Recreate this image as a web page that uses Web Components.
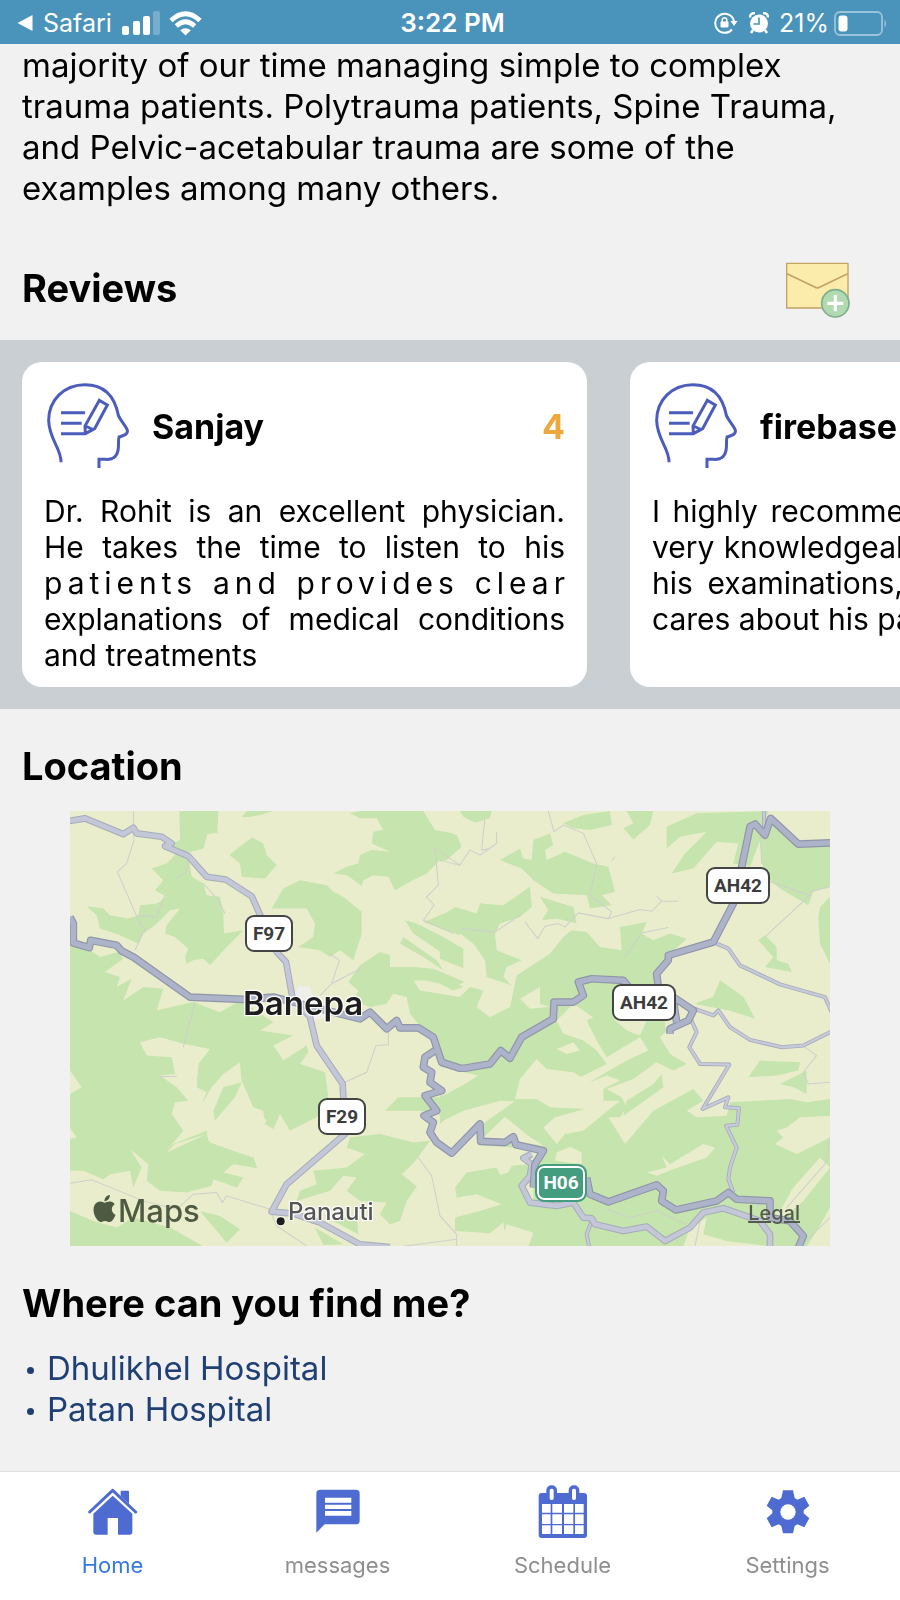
<!DOCTYPE html>
<html lang="en">
<head>
<meta charset="utf-8">
<meta name="viewport" content="width=device-width, initial-scale=1">
<title>Doctor profile</title>
<style>
  html { background: #f1f1f1; }
  body { margin: 0; font-family: Inter, "Liberation Sans", sans-serif; color: #000; }
</style>
</head>
<body>
<doctor-app></doctor-app>

<template id="t-status-bar">
  <style>
    :host { display: grid; grid-template-columns: 1fr auto 1fr; align-items: center; height: 44px; box-sizing: border-box;
      padding: 2px 12px 0 17px; background: #4a93bb; color: #fff; font-size: 25px; line-height: 30px; }
    svg { display: block; }
    .side { display: flex; align-items: center; }
    .end { justify-content: flex-end; }
    .back { display: flex; align-items: center; gap: 10px; color: inherit; text-decoration: none; margin-right: 10px; }
    .wifi { margin-left: 9px; }
    .time { font-size: 26px; font-weight: 600; }
    .alarm { margin: 0 10px 0 11px; }
    .battery { margin-left: 5px; }
  </style>
  <div class="side">
    <a class="back" href="#safari"><svg width="16" height="18" viewBox="0 0 16 18"><path d="M15.500 1v16L0.500 9z" fill="#fff"/></svg>Safari</a>
    <svg width="38" height="24" viewBox="0 0 38 24" fill="#fff"><rect y="15" width="7" height="9" rx="2"/><rect x="11" y="10" width="7" height="14" rx="2"/><rect x="21" y="5" width="7" height="19" rx="2"/><rect x="31" width="7" height="24" rx="2" opacity=".25"/></svg>
    <svg class="wifi" width="33" height="25" viewBox="0 0 33 25"><path d="M2 9.500Q16.500-4 31 9.500M7.300 15Q16.500 6.500 25.700 15" fill="none" stroke="#fff" stroke-width="4.600"/><path d="M16.500 24.500l-5.300-5.300q5.300-4 10.600 0z" fill="#fff"/></svg>
  </div>
  <div class="time">3:22 PM</div>
  <div class="side end">
    <svg width="24" height="22" viewBox="0 0 24 22"><path d="M18 17.500A9.500 9.500 0 1 1 20 9" fill="none" stroke="#fff" stroke-width="2"/><path d="M16.500 9h7l-3.500 5z" fill="#fff"/><rect x="6.500" y="9.500" width="8" height="6" rx="1" fill="#fff"/><path d="M8.200 10V8a2.300 2.300 0 0 1 4.600 0v2" fill="none" stroke="#fff" stroke-width="1.500"/></svg>
    <svg class="alarm" width="20" height="22" viewBox="0 0 20 22"><circle cx="10" cy="11.500" r="9" fill="#fff"/><path d="M1 5.500Q1 1 6 1M19 5.500Q19 1 14 1" fill="none" stroke="#fff" stroke-width="2.400"/><path d="M4 18l-2 3M16 18l2 3" stroke="#fff" stroke-width="2.500"/><path d="M10 5.500v6.500H4.500" fill="none" stroke="#4a93bb" stroke-width="1.600"/></svg>
    <span>21%</span>
    <svg class="battery" width="54" height="25" viewBox="0 0 54 25"><rect x="1" y="1" width="47" height="23" rx="5" fill="none" stroke="#fff" stroke-width="1.800" opacity=".45"/><rect x="4.500" y="4.500" width="9" height="16" rx="3" fill="#fff"/><path d="M50.500 8.500q3 4 0 8z" fill="#fff" opacity=".45"/></svg>
  </div>
</template>

<template id="t-heading">
  <style>
    :host { display: block; }
    h2 { margin: 0; font-size: 38px; line-height: 46px; font-weight: 700; }
  </style>
  <h2><slot></slot></h2>
</template>

<template id="t-review-card">
  <style>
    :host { display: block; flex: 0 0 565px; box-sizing: border-box; background: #fff; border-radius: 20px; padding: 20px 22px 14px; }
    header { display: flex; align-items: center; height: 88px; margin-bottom: 23px; font-size: 34px; font-weight: 700; }
    svg { width: 88px; height: 88px; margin-right: 20px; flex: none; }
    .score { margin-left: auto; color: #eea73c; }
    .text { font-size: 30px; line-height: 36px; text-align: justify; }
  </style>
  <header>
    <svg viewBox="132 126 264 264" fill="none" stroke="#4c5cbd" stroke-width="9">
      <path d="M183 367C184 325 148 300 146 242C146 180 192 134 255 134C312 134 344 168 355 226C361 240 377 258 382 270C384 282 376 285 357 291C353 308 359 325 351 341C345 355 333 360 315 358H297V384"/>
      <path d="M183 218H255M183 250H245M183 281H256L284 266L322 195L298 181L255 258L256 281M256 258L282 270"/>
    </svg>
    <slot name="name"></slot>
    <span class="score"><slot name="score"></slot></span>
  </header>
  <div class="text"><slot></slot></div>
</template>

<template id="t-shield">
  <style>
    :host { display: flex; align-items: center; justify-content: center; box-sizing: border-box; width: 64px; height: 37px;
      border: 2px solid #444; border-radius: 9px; background: #fff; color: #3c3c3c; font: 700 19px/22px Roboto, sans-serif; }
    :host([short]) { width: 48px; }
    :host([national]) { width: 52px; height: 38px; border-color: #459d80; background: #459d80; color: #fff; box-shadow: inset 0 0 0 2px #fff; }
  </style>
  <slot></slot>
</template>

<template id="t-map">
  <style>
    :host { display: block; position: relative; height: 435px; overflow: hidden; background: #e9edcc; }
    .land { display: block; width: 760px; height: 435px; }
    map-shield, .place, .brand, .legal { position: absolute; }
    .place { color: #1d1d1d; text-shadow: 0 0 2px #fff, 1px 1px 1px #fff, -1px -1px 1px #fff, 1px -1px 1px #fff, -1px 1px 1px #fff; }
    .city { left: 173px; top: 172px; font-size: 33px; line-height: 40px; font-weight: 600; }
    .town { left: 218px; top: 386px; font-size: 24px; line-height: 30px; font-weight: 500; color: #555; }
    .brand { left: 21px; top: 381px; display: flex; font-size: 31px; line-height: 38px; font-weight: 500; color: #4f5a42; }
    .brand svg { width: 27px; height: 27px; margin-top: 3px; }
    .legal { right: 30px; top: 390px; font-size: 20px; line-height: 24px; font-weight: 500; color: #555b4c; }
  </style>
  <svg class="land" viewBox="30 33 2280 1302" preserveAspectRatio="none" role="img" aria-label="Map of Banepa and Panauti">
    <defs>
      <g id="major">
        <path d="M30 350L40 370V428L88 442L92 420L170 435L185 452L220 470L390 590L550 597L640 590L700 605L840 640L900 655L930 635L980 685L1010 660L1020 682H1075L1120 710L1145 785L1200 803L1215 803L1290 790L1322 750L1350 773L1385 710L1480 655L1482 605H1540L1570 585L1555 545L1595 535L1690 540L1740 600"/>
        <path d="M1830 700V685L1885 660L1900 630L1840 590M1840 600L1850 665M1795 560L1790 520L1825 480V465L1960 425L2020 310L2045 200L2070 80L2085 72L2115 105L2132 55L2215 132L2320 128"/>
        <path d="M1125 750L1095 770L1090 800L1115 815L1110 845L1145 870L1095 885L1130 930L1092 945L1120 965L1110 995L1130 1025L1175 1057L1260 970L1262 1022L1335 1025L1360 1008L1368 1032L1450 1050L1425 1090L1420 1160M1580 1130L1590 1180L1645 1203L1790 1152L1810 1170L1805 1200L1848 1227L1970 1200L2005 1175L2030 1195L2130 1200V1250L2190 1260L2230 1305L2215 1340"/>
      </g>
      <g id="medium">
        <path d="M20 64L75 55L190 102L220 83L230 100L305 110L335 130L315 138L385 168L440 230L497 238L575 288L650 455L678 485L697 590L750 650L770 735L848 850L855 1000L680 1150L635 1232L700 1238L780 1265L900 1330L990 1338"/>
        <path d="M1415 1060L1390 1072L1415 1090L1410 1125L1385 1155L1410 1205L1490 1215L1540 1205L1570 1250L1595 1252L1605 1270L1690 1290L1760 1277L1815 1320L1890 1280L1930 1235L1990 1222L2100 1260L2130 1300V1340"/>
      </g>
      <path id="minor" d="M2112 33V85M1970 430L2005 445L2040 495L2160 552L2295 590L2315 635M1890 620L1960 645L1975 630L2010 680L2070 718L2165 740L2230 735L2320 690M1890 650L1910 695L1888 740L1920 790L2008 792L1928 925L2005 890L1995 920L2037 922L2032 972L1998 975L2030 1040L2010 1100L2005 1135L2020 1175M1595 1260L1580 1300L1588 1340"/>
    </defs>
    <g fill="#c6e4ad">
      <path d="M358 33H475L472 98L442 102L430 145L383 158L395 230L430 250L440 285L480 290L490 340L492 400L550 390L500 440L450 495L430 475L400 480L380 490L375 470L385 445L345 410L315 400L320 375L360 325L330 330L285 375L250 400L235 430L180 405L120 385L110 345L80 318L130 325L150 345L205 355L235 345L240 315L290 310L320 290L285 270L310 240L275 205L320 190L345 165L340 130L360 120Z"/>
      <path d="M575 112L610 130L620 165L650 195L615 235L545 230L540 190L508 165ZM545 50L560 33H640L600 45L565 52Z"/>
      <path d="M870 40L900 33H1090L1125 90L1180 100L1200 130L1140 180L1100 220L1050 245L1005 270L985 230L940 225L910 240L905 257L860 225L820 220L860 200L895 190L900 165L935 150L990 155L935 130L940 95L970 90L950 55L900 55Z"/>
      <path d="M635 325L670 265L720 240L800 255L820 275L850 290L905 335V400L880 480L840 450L810 470L780 450L715 440L760 410L765 370L740 325L690 325Z"/>
      <path d="M1090 365L1190 325L1200 405ZM1035 360L1070 370L1150 410L1210 445V505L1120 440L1060 400ZM1030 410L1130 480L1150 510L1090 470L1020 430Z"/>
      <path d="M865 545L900 495L960 455L990 465V500L1060 500L1120 505L1215 545L1180 560L1100 540L1060 540L1080 570L1200 590V780L1150 760L1115 705L1075 670L1050 640L1040 590L1000 580L980 610L930 620L880 600L895 570Z"/>
      <path d="M30 430L90 450L120 470L175 455L190 475L135 515L180 530L170 560L215 535L190 600L250 560L310 565L290 630L400 605L480 635L540 600L640 665L600 690L700 705L640 735L670 780L740 735L745 755L720 790L795 815L805 890L770 950L690 990L660 940L640 985L615 970L610 930L580 920L545 840L490 830L440 1000L345 1030L320 1055L440 1000L450 1025L520 1050L580 1070L592 1102L520 1090L490 1115L550 1130L530 1160L460 1135L455 1155L380 1175L300 1170L260 1140L265 1090L210 1045L245 1100L220 1160L210 1110L150 1120L130 1135L70 1110L30 1110Z"/>
      <path d="M975 930L1015 890H1110L1090 930ZM1020 890H1150V945L1080 930H1020ZM1140 885L1200 855V950L1140 920ZM760 1110L860 1100L915 1060L860 1040L870 1010L960 1000L1060 1025L1110 1020L1070 1075L1030 1120L1075 1150L1040 1200L1020 1260L990 1270L960 1240L980 1205L900 1200L860 1170L890 1130L850 1125L810 1170L710 1200L720 1170L770 1150Z"/>
      <path d="M30 1336V1230L100 1260L170 1280L220 1250L330 1280L430 1336ZM420 1230L480 1245L540 1285L500 1325ZM765 1280L850 1330L790 1332ZM820 1260L890 1240L895 1300Z"/>
    </g>
    <g fill="#c6e4ad" transform="translate(1140)">
      <path d="M60 33H155L150 55L105 68L70 50ZM0 95L50 105L65 140L20 180L0 185ZM370 70L430 45L510 33L515 75L450 90L400 85ZM560 33H640L630 75L580 118L550 85L580 70Z"/>
      <path d="M680 80L770 40L985 33L965 110L930 200L880 190L895 130L830 125L760 205L695 220L735 160L800 95L720 110L680 145ZM960 90L1000 50L1075 130L1170 125V260L1120 275L1105 315L1020 265L990 240L965 190ZM1140 320L1170 290V490L1140 430L1135 350Z"/>
      <path d="M280 120L330 100L340 135L315 150L320 180L375 155L460 190L505 200L525 275L485 285L515 315L450 325L440 285L340 280L280 240L245 205L180 180L240 145L250 175L275 180ZM300 290L400 320L410 370L350 355L305 360L325 330Z"/>
      <path d="M0 350L45 320L110 340L120 310L190 315L270 260L275 320L240 350L180 370L165 400L170 450L245 480L200 500L190 530L215 555L140 530L135 480L100 430L60 400L0 385ZM0 420L70 480L60 500L0 475ZM0 520L70 560L40 570L0 550Z"/>
      <path d="M230 525L330 460L370 410L395 390L440 395L480 440L545 450L540 380L620 365L605 400L640 420L690 400L740 415L690 460L650 520L680 700H0V600L60 590L90 560L130 570L110 620L150 650L210 620ZM765 610L820 590L840 540L910 590L945 655L870 630ZM955 420L975 405L1010 440V480L1045 490L1055 515L975 500L1000 470Z"/>
      <path d="M0 690H1170V1336H0Z"/>
    </g>
    <path d="M240 725L300 710L370 730L450 745L415 790L410 860L440 875L425 910L455 860L490 820L540 785L545 845L570 910L620 960L560 1040L445 1020L440 990L340 1030L320 1050L370 990L335 940L345 905L385 900L350 860L300 825L345 820L335 770L260 765ZM30 810L65 860L30 880ZM30 980L50 1010L30 1015Z" fill="#e9edcc"/>
    <path d="M545 845L525 890L465 960L460 930L490 860ZM1140 680H1200V800L1145 785Z" fill="#c6e4ad"/>
    <g fill="#e9edcc" transform="translate(1140 660)">
      <path d="M240-65L300-100V-50L330-40L270-35ZM350 0L400-50L460-10L440 0L470 60L500 110L600 50L625 90L560 120L490 160L440 190L400 180L500 130L470 90L430 60L370 40ZM350 85L400 65L420 90L380 100ZM520-5L560 30L600 45L620 0Z"/>
      <path d="M225 235L240 175L290 115L320 145L400 155L450 185L500 165L540 180L490 205V240L540 240L430 330L375 340L350 370L310 320L345 290L435 265L330 260L290 235Z"/>
      <path d="M500 205L580 175L650 125L700 150L740 130L690 100L660 50L710 0V-20H1170V235L1100 245L1050 235L870 245L860 285L770 290L740 270L790 240L760 205L640 270L555 370L505 290L540 290L560 260L545 230Z"/>
      <path d="M1170 285L1080 290L1040 320L1010 330L1030 350L1005 370L1070 400L1170 350ZM620 455L680 440L665 405L690 430L790 370L825 380L800 410L700 445L650 465ZM750 620L800 590L790 640L860 660L1000 677H730ZM960 590L1020 570L1060 500L1140 410L1170 440L1090 540L1020 600ZM1100 677L1130 630L1170 560V677Z"/>
    </g>
    <g fill="#e9edcc" transform="translate(1020 540)">
      <path d="M105 330V255L235 285L195 310L130 345ZM110 440L130 420L190 390L300 360L345 362L255 425L155 515L100 480ZM250 470L315 408L385 465L430 495L340 480ZM465 540L470 515L510 498L545 515V550Z"/>
      <path d="M155 520L240 435L250 495L340 500L425 515L400 570L385 550L335 555L325 575L300 582L290 560L200 575L165 620L170 650L230 640L305 670L240 690L165 710V750L270 757L310 725L320 797H-30L10 720L55 620L5 580L50 540L90 560L115 545L85 500L100 480ZM370 620L400 600V660L385 650ZM300 797L320 730L400 755L385 797Z"/>
    </g>
    <g fill="#c6e4ad" transform="translate(1140 660)">
      <path d="M550 285L560 240L640 190L665 160L670 200L600 250ZM925 170L960 120L1080 125L1075 150L1010 165ZM1020 190L1100 150V220L1060 200ZM765-50L820-70L840-120L910-70L945-5L870-30Z"/>
    </g>
    <path d="M690 590L720 555L750 560L760 590L790 600L800 650L760 660L700 620Z" fill="#eeeeea"/>
    <g fill="none" stroke="#cdd0cc" stroke-width="3">
      <path d="M220 33L222 120L200 190L172 215L240 370L255 385L225 450M235 345L290 350L315 285M810 460L838 480L815 550L780 585M815 550L900 505M1200 195L1125 145L1135 255L1100 290L1122 315L1090 360L1180 400M385 180L380 215L350 235M430 250L475 300L495 340"/>
      <path d="M985 690V733L948 735L920 815L855 845M30 1147L95 1137L250 1200L350 1225L400 1180L470 1175L487 1205L500 1185L630 1225M635 1240L650 1275L740 1335M1075 1070L1115 1125L1140 1245L1190 1300V1336M1030 1336L1190 1315M405 605L370 740M300 828H350"/>
      <path d="M1140 180L1200 195L1230 150L1260 165L1310 130V95M1275 50L1265 150L1290 145M1465 33L1482 95L1510 75L1570 100L1610 190L1590 285L1655 335L1645 355L1555 338L1515 380L1495 370L1455 378L1433 415L1395 365M1645 355L1740 328L1775 333L1805 303H1855M1790 288L1805 303M1655 182L1665 170M1695 470L1745 398L1825 382M1205 385L1305 395L1380 345M2130 245L2250 285L2115 410M2250 275L2310 260M2100 90L2105 190"/>
      <path d="M2235 740L2270 765L2230 815L2245 850L2310 845M2310 1010L2295 1090L2180 1220M1640 1225L1710 1250L1790 1230L1880 1270M1920 1260L1905 1337M2310 1250L2220 1337"/>
    </g>
    <g fill="none" stroke-linejoin="round">
      <use href="#minor" stroke="#a6abbb" stroke-width="12"/><use href="#minor" stroke="#c6cada" stroke-width="7"/>
      <use href="#medium" stroke="#a6abbb" stroke-width="20"/><use href="#medium" stroke="#c3c7d7" stroke-width="14"/>
      <use href="#major" stroke="#9095aa" stroke-width="23"/><use href="#major" stroke="#adb3c8" stroke-width="16"/>
    </g>
    <circle cx="662" cy="1261" r="15" fill="#fff"/><circle cx="662" cy="1261" r="12" fill="#1d1d1d"/>
  </svg>
  <map-shield short style="left:175px;top:104px">F97</map-shield>
  <map-shield style="left:636px;top:56px">AH42</map-shield>
  <map-shield style="left:542px;top:173px">AH42</map-shield>
  <map-shield short style="left:248px;top:287px">F29</map-shield>
  <map-shield national style="left:465px;top:353px">H06</map-shield>
  <span class="place city">Banepa</span>
  <span class="place town">Panauti</span>
  <div class="brand"><svg viewBox="0 0 24 24" fill="currentColor" aria-hidden="true"><path d="M12.152 6.896c-.948 0-2.415-1.078-3.96-1.04-2.040.027-3.910 1.183-4.961 3.014-2.117 3.675-.546 9.103 1.519 12.090 1.013 1.454 2.208 3.090 3.792 3.039 1.520-.065 2.090-.987 3.935-.987 1.831 0 2.350.987 3.960.948 1.637-.026 2.676-1.480 3.676-2.948 1.156-1.688 1.636-3.325 1.662-3.415-.039-.013-3.182-1.221-3.220-4.857-.026-3.040 2.480-4.494 2.597-4.559-1.429-2.090-3.623-2.324-4.390-2.376-2-.156-3.675 1.090-4.610 1.090zM15.530 3.830c.843-1.012 1.400-2.427 1.245-3.830-1.207.052-2.662.805-3.532 1.818-.780.896-1.454 2.338-1.273 3.714 1.338.104 2.715-.688 3.559-1.701"/></svg>Maps</div>
  <a class="legal" href="#legal">Legal</a>
</template>

<template id="t-tab">
  <style>
    :host { display: block; flex: 1; }
    a { display: flex; flex-direction: column; align-items: center; gap: 13px; padding: 13px 0 22px; color: #8e8e8f; text-decoration: none; font-size: 22px; line-height: 26px; }
    :host([active]) a { color: #3478e5; }
    ::slotted(svg) { width: 54px; height: 54px; }
  </style>
  <a><slot name="icon"></slot><span><slot></slot></span></a>
</template>

<template id="t-app">
  <style>
    :host { display: flex; flex-direction: column; min-height: 100vh; background: #f1f1f1; }
    main { flex: 1; }
    .bio { margin: 0; padding: 1px 22px 0; font-size: 33px; line-height: 41px; }
    .reviews-head { display: flex; justify-content: space-between; align-items: flex-start; padding: 53px 50px 22px 22px; }
    .reviews-head section-heading { margin-top: 3px; }
    button { display: block; padding: 0; border: 0; background: none; }
    button svg { display: block; width: 64px; height: 56px; }
    .strip { display: flex; gap: 43px; padding: 22px; background: #cacfd3; overflow-x: auto; scrollbar-width: none; }
    .spread { letter-spacing: 5px; }
    .line { display: block; white-space: nowrap; text-align-last: justify; }
    .location { padding: 34px 22px 0; }
    area-map { margin: 22px 48px 0; }
    ul { list-style: none; margin: 22px 0 0; padding: 0; font-size: 33px; line-height: 41px; }
    li { display: flex; align-items: center; gap: 13px; padding-left: 5px; color: #1f3f75; }
    li::before { content: ""; width: 7px; height: 7px; border-radius: 50%; background: currentColor; margin-top: 3px; }
    li a { color: inherit; text-decoration: none; }
    nav { display: flex; background: #fff; border-top: 1px solid #e0e0e0; }
  </style>
  <status-bar></status-bar>
  <main>
    <p class="bio">majority of our time managing simple to complex trauma patients. Polytrauma patients, Spine Trauma, and Pelvic-acetabular trauma are some of the examples among many others.</p>
    <div class="reviews-head">
      <section-heading>Reviews</section-heading>
      <button type="button" aria-label="Add review"><svg viewBox="1008 786 192 168"><path d="M1010 790H1194V924H1010Z" fill="#fbecab" stroke="#c3a366" stroke-width="4"/><path d="M1011 821L1094 861Q1102 866 1110 861L1193 821" fill="none" stroke="#c3a366" stroke-width="5"/><circle cx="1156" cy="910" r="41" fill="#b1dab0" stroke="#7fae8b" stroke-width="5"/><path d="M1156 886V934M1132 910H1180" stroke="#fff" stroke-width="10"/></svg></button>
    </div>
    <div class="strip">
      <review-card><span slot="name">Sanjay</span><span slot="score">4</span>Dr. Rohit is an excellent physician. He takes the time to listen to his <span class="spread">patients and provides clea</span>r explanations of medical conditions and treatments</review-card>
      <review-card><span slot="name">firebase</span><span slot="score">5</span><span class="line">I highly recommend Dr. Rohit. He is</span><span class="line">very knowledgeable and thorough in</span><span class="line">his examinations, and he genuinely</span>cares about his patients</review-card>
    </div>
    <section class="location">
      <section-heading>Location</section-heading>
      <area-map></area-map>
    </section>
    <section class="location">
      <section-heading>Where can you find me?</section-heading>
      <ul><li><a href="#dhulikhel">Dhulikhel Hospital</a></li><li><a href="#patan">Patan Hospital</a></li></ul>
    </section>
  </main>
  <nav>
    <tab-item active href="#home"><svg slot="icon" viewBox="257 106 162 162" fill="#4d6bd0"><path d="M268 187L337 122L406 187" fill="none" stroke="#4d6bd0" stroke-width="9" stroke-linecap="round" stroke-linejoin="round"/><path d="M361 133V126Q361 123 364 123H383Q386 123 386 126V162L361 139ZM279 192L337 138L396 192V247Q396 255 388 255H353V205H322V255H288Q279 255 279 246Z"/></svg>Home</tab-item>
    <tab-item href="#messages"><svg slot="icon" viewBox="932 106 162 162"><path d="M960 120H1067Q1078 120 1078 131V213Q1078 224 1067 224H973L948 249V131Q948 120 960 120Z" fill="#4d6bd0"/><path d="M974 144H1053V159H974ZM974 165H1053V178H974ZM974 184H1053V198H974Z" fill="#fff"/></svg>messages</tab-item>
    <tab-item href="#schedule"><svg slot="icon" viewBox="255 105 162 162"><rect x="263" y="129" width="145" height="135" rx="9" fill="#4d6bd0"/><path d="M273 162h26v26h-26zM304 162h29v26h-29zM339 162h28v26h-28zM372 162h26v26h-26zM273 193h26v29h-26zM304 193h29v29h-29zM339 193h28v29h-28zM372 193h26v29h-26zM273 226h26v26h-26zM304 226h29v26h-29zM339 226h28v26h-28zM372 226h26v26h-26z" fill="#fff"/><rect x="291" y="111" width="22" height="44" rx="10" fill="#fff" stroke="#4d6bd0" stroke-width="10"/><rect x="358" y="111" width="22" height="44" rx="10" fill="#fff" stroke="#4d6bd0" stroke-width="10"/></svg>Schedule</tab-item>
    <tab-item href="#settings"><svg slot="icon" viewBox="932 104 162 162"><path d="M998 120H1028L1033 143L1041 148L1062 139L1077 166L1060 180V189L1077 204L1062 231L1041 222L1033 227L1028 249H998L993 227L985 222L964 231L949 204L966 189V180L949 166L964 139L985 148L993 143Z" fill="#4d6bd0"/><circle cx="1013" cy="185" r="23" fill="#fff"/></svg>Settings</tab-item>
  </nav>
</template>

<script>
  const stamp = (host, id) => {
    const root = host.attachShadow({ mode: "open" });
    root.append(document.getElementById(id).content.cloneNode(true));
    return root;
  };
  class StatusBar extends HTMLElement { constructor() { super(); stamp(this, "t-status-bar"); } }
  class SectionHeading extends HTMLElement { constructor() { super(); stamp(this, "t-heading"); } }
  class ReviewCard extends HTMLElement { constructor() { super(); stamp(this, "t-review-card"); } }
  class MapShield extends HTMLElement { constructor() { super(); stamp(this, "t-shield"); } }
  class AreaMap extends HTMLElement { constructor() { super(); stamp(this, "t-map"); } }
  class TabItem extends HTMLElement {
    constructor() { super(); this.link = stamp(this, "t-tab").querySelector("a"); }
    connectedCallback() { this.link.href = this.getAttribute("href"); }
  }
  class DoctorApp extends HTMLElement { constructor() { super(); stamp(this, "t-app"); } }
  customElements.define("status-bar", StatusBar);
  customElements.define("section-heading", SectionHeading);
  customElements.define("review-card", ReviewCard);
  customElements.define("map-shield", MapShield);
  customElements.define("area-map", AreaMap);
  customElements.define("tab-item", TabItem);
  customElements.define("doctor-app", DoctorApp);
</script>
</body>
</html>
